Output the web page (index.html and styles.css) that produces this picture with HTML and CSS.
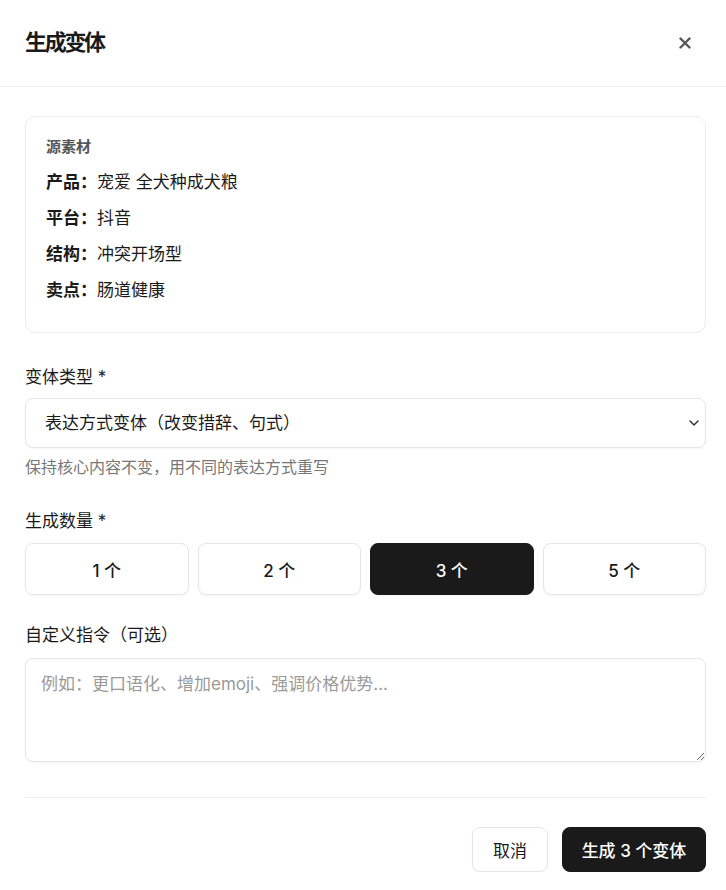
FILE: index.html
```html
<!DOCTYPE html>
<html lang="zh-CN">
<head>
<meta charset="utf-8">
<title>生成变体</title>
<link rel="stylesheet" href="styles.css">
</head>
<body>
<div class="dialog">
  <header class="head">
    <h1 class="title">生成变体</h1>
    <button class="close" aria-label="关闭">
      <svg width="12" height="12" viewBox="0 0 12 12"><path d="M1.5 1.5L10.5 10.5M10.5 1.5L1.5 10.5" stroke="#555" stroke-width="2.4" stroke-linecap="round"/></svg>
    </button>
  </header>
  <main class="body">
    <section class="card">
      <div class="card-label">源素材</div>
      <div class="row"><b>产品：</b>宠爱 全犬种成犬粮</div>
      <div class="row"><b>平台：</b>抖音</div>
      <div class="row"><b>结构：</b>冲突开场型</div>
      <div class="row"><b>卖点：</b>肠道健康</div>
    </section>

    <label class="field-label first">变体类型 *</label>
    <div class="select-wrap">
      <select class="select">
        <option>表达方式变体（改变措辞、句式）</option>
      </select>
      <svg class="chev" width="10" height="6" viewBox="0 0 10 6"><path d="M1 1L5 5L9 1" fill="none" stroke="#333" stroke-width="1.5" stroke-linecap="round" stroke-linejoin="round"/></svg>
    </div>
    <div class="hint">保持核心内容不变，用不同的表达方式重写</div>

    <label class="field-label second">生成数量 *</label>
    <div class="counts">
      <button class="count">1 个</button>
      <button class="count">2 个</button>
      <button class="count active">3 个</button>
      <button class="count">5 个</button>
    </div>

    <label class="field-label third">自定义指令（可选）</label>
    <textarea class="textarea" placeholder="例如：更口语化、增加emoji、强调价格优势..."></textarea>

    <footer class="foot">
      <button class="btn ghost">取消</button>
      <button class="btn primary">生成 3 个变体</button>
    </footer>
  </main>
</div>
</body>
</html>
```
FILE: styles.css
```css
* { box-sizing: border-box; }
html, body { margin: 0; padding: 0; background: #fff; }
body {
  font-family: "Inter", "Noto Sans CJK SC", sans-serif;
  color: #1a1a1a;
}
.head {
  height: 87px;
  padding: 0 25px;
  display: flex;
  align-items: center;
  justify-content: space-between;
  border-bottom: 1px solid #f0f0f0;
}
.title {
  margin: 0;
  font-size: 22px;
  font-weight: 700;
  letter-spacing: -2.3px;
  line-height: 1;
  padding-bottom: 2px;
}
.close {
  border: 0;
  background: none;
  padding: 0;
  width: 16px;
  height: 16px;
  display: flex;
  align-items: center;
  justify-content: center;
  margin-right: 8px;
}
.body {
  padding: 29px 20px 0 25px;
  display: flex;
  flex-direction: column;
}
.card {
  border: 1px solid #ececec;
  border-radius: 10px;
  padding: 19px 20px 29px;
  height: 217px;
}
.card-label {
  font-size: 15px;
  font-weight: 700;
  color: #555;
  line-height: 22px;
}
.row {
  font-size: 17px;
  line-height: 24px;
  margin-top: 12px;
  color: #1a1a1a;
}
.row b { font-weight: 700; }
.field-label {
  font-size: 17px;
  line-height: 22px;
  color: #1a1a1a;
}
.field-label.first { margin-top: 33px; }
.field-label.second { margin-top: 33px; }
.field-label.third { margin-top: 29px; }
.select-wrap {
  margin-top: 10px;
  position: relative;
}
.select {
  width: 100%;
  height: 50px;
  border: 1px solid #e6e6e6;
  border-radius: 8px;
  background: #fff;
  font-family: inherit;
  font-size: 17px;
  color: #1a1a1a;
  padding: 0 30px 0 19px;
  appearance: none;
  -webkit-appearance: none;
  box-shadow: 0 1px 2px rgba(0,0,0,0.04);
}
.chev {
  position: absolute;
  right: 7px;
  top: 22px;
  pointer-events: none;
}
.hint {
  font-size: 16px;
  line-height: 20px;
  color: #777;
  margin-top: 9px;
}
.counts {
  margin-top: 11px;
  display: grid;
  grid-template-columns: repeat(4, 1fr);
  gap: 9px;
}
.count {
  height: 52px;
  border: 1px solid #e6e6e6;
  border-radius: 8px;
  background: #fff;
  font-family: inherit;
  font-size: 17px;
  font-weight: 500;
  color: #1a1a1a;
  box-shadow: 0 1px 2px rgba(0,0,0,0.04);
}
.count.active {
  background: #1a1a1a;
  border-color: #1a1a1a;
  color: #fff;
}
.textarea {
  margin-top: 12px;
  height: 104px;
  width: 100%;
  border: 1px solid #e6e6e6;
  border-radius: 8px;
  padding: 13px 15px;
  font-family: inherit;
  font-size: 17px;
  line-height: 24px;
  color: #1a1a1a;
  resize: vertical;
  box-shadow: 0 1px 2px rgba(0,0,0,0.04);
}
.textarea::placeholder { color: #9a9a9a; }
.foot {
  margin-top: 35px;
  border-top: 1px solid #ececec;
  padding-top: 29px;
  display: flex;
  justify-content: flex-end;
  gap: 14px;
}
.btn {
  height: 45px;
  border-radius: 8px;
  font-family: inherit;
  font-size: 17px;
  padding: 0;
}
.btn.ghost {
  background: #fff;
  border: 1px solid #e6e6e6;
  color: #1a1a1a;
  width: 76px;
  box-shadow: 0 1px 2px rgba(0,0,0,0.04);
}
.btn.primary {
  background: #1a1a1a;
  border: 1px solid #1a1a1a;
  color: #fff;
  font-weight: 500;
  width: 144px;
}
```
